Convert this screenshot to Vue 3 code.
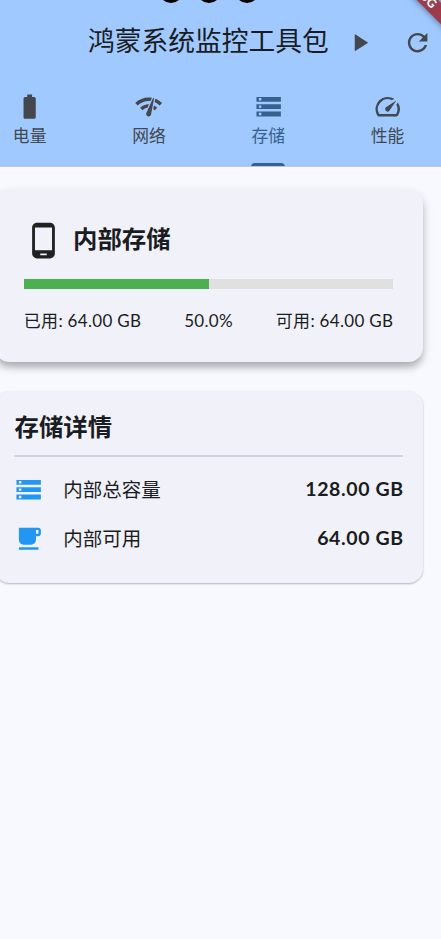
<script setup>
const icons = {
  battery: 'M15.67 4H14V2h-4v2H8.33C7.6 4 7 4.6 7 5.33v15.33C7 21.4 7.6 22 8.33 22h7.33c.74 0 1.34-.6 1.34-1.33V5.33C17 4.6 16.4 4 15.67 4z',
  network: 'M15.9 5c-.17 0-.32.09-.41.23l-.07.15-5.18 11.65c-.16.29-.26.61-.26.96 0 1.11.9 2.01 2.01 2.01.96 0 1.77-.68 1.96-1.59l.01-.03L16.4 5.5c0-.28-.22-.5-.5-.5zM1 9l2 2c2.88-2.88 6.79-4.08 10.53-3.62l1.19-2.68C9.89 3.84 4.74 5.27 1 9zm20 2l2-2c-1.64-1.64-3.55-2.82-5.59-3.57l-.53 2.82c1.5.62 2.9 1.53 4.12 2.75zm-4 4l2-2c-.8-.8-1.7-1.42-2.66-1.89l-.55 2.92c.42.27.83.59 1.21.97zM5 13l2 2c1.13-1.13 2.56-1.79 4.03-2l1.28-2.88c-2.63-.08-5.3.87-7.31 2.88z',
  storage: 'M2 20h20v-4H2v4zm2-3h2v2H4v-2zM2 4v4h20V4H2zm4 3H4V5h2v2zm-4 7h20v-4H2v4zm2-3h2v2H4v-2z',
  speed: 'M20.38 8.57l-1.23 1.85a8 8 0 0 1-.22 7.58H5.07A8 8 0 0 1 15.58 6.85l1.85-1.23A10 10 0 0 0 3.35 19a2 2 0 0 0 1.72 1h13.85a2 2 0 0 0 1.74-1 10 10 0 0 0-.27-10.44zm-9.79 6.84a2 2 0 0 0 2.83 0l5.66-8.49-8.49 5.66a2 2 0 0 0 0 2.83z',
  cup: 'M20 3H4v10c0 2.21 1.79 4 4 4h6c2.21 0 4-1.79 4-4v-3h2c1.11 0 2-.9 2-2V5c0-1.11-.89-2-2-2zm0 5h-2V5h2v3zM4 19h16v2H4z',
  phone: 'M16 1H8C6.34 1 5 2.34 5 4v16c0 1.66 1.34 3 3 3h8c1.66 0 3-1.34 3-3V4c0-1.66-1.34-3-3-3zm-2 20h-4v-1h4v1zm3.25-3H6.75V4h10.5v14z',
  play: 'M8 5v14l11-7z',
  refresh: 'M17.65 6.35C16.2 4.9 14.21 4 12 4c-4.42 0-7.99 3.58-7.99 8s3.57 8 7.99 8c3.73 0 6.84-2.55 7.73-6h-2.08c-.82 2.33-3.04 4-5.65 4-3.31 0-6-2.69-6-6s2.69-6 6-6c1.66 0 3.14.69 4.22 1.78L13 11h7V4l-2.35 2.35z',
}
const tabs = [
  { label: '电量', icon: 'battery' },
  { label: '网络', icon: 'network' },
  { label: '存储', icon: 'storage', active: true },
  { label: '性能', icon: 'speed' },
]
const percent = 50
const details = [
  { label: '内部总容量', value: '128.00 GB', icon: 'storage' },
  { label: '内部可用', value: '64.00 GB', icon: 'cup' },
]
</script>

<template>
  <div class="screen">
    <header class="header">
      <div class="cutouts"><i></i><i></i><i></i></div>
      <div class="debug"><span>DEBUG</span></div>
      <div class="bar">
        <h1>鸿蒙系统监控工具包</h1>
        <div class="actions">
          <svg class="icon" viewBox="0 0 24 24"><path :d="icons.play" /></svg>
          <svg class="icon" viewBox="0 0 24 24"><path :d="icons.refresh" /></svg>
        </div>
      </div>
      <nav class="tabs">
        <div v-for="t in tabs" :key="t.label" class="tab" :class="{ active: t.active }">
          <svg class="icon" viewBox="0 0 24 24"><path :d="icons[t.icon]" /></svg>
          <span>{{ t.label }}</span>
        </div>
      </nav>
    </header>

    <main class="content">
      <section class="card summary">
        <div class="heading">
          <svg viewBox="0 0 24 24"><path :d="icons.phone" /></svg>
          <h2>内部存储</h2>
        </div>
        <div class="track"><div class="fill" :style="{ width: percent + '%' }"></div></div>
        <div class="figures">
          <span>已用: 64.00 GB</span>
          <span>50.0%</span>
          <span>可用: 64.00 GB</span>
        </div>
      </section>

      <section class="card detail">
        <h2>存储详情</h2>
        <div v-for="d in details" :key="d.label" class="row">
          <svg class="icon" viewBox="0 0 24 24"><path :d="icons[d.icon]" /></svg>
          <span class="name">{{ d.label }}</span>
          <strong>{{ d.value }}</strong>
        </div>
      </section>
    </main>
  </div>
</template>

<style>
body {
  background: #f8f9ff;
}
</style>

<style scoped>
.screen {
  width: 441px;
  height: 939px;
  overflow: hidden;
  background: #f8f9ff;
  color: #191c20;
  font-family: Lato, "Noto Sans CJK SC", sans-serif;
}
h1,
h2 {
  margin: 0;
}
svg {
  display: block;
  flex: none;
  fill: currentColor;
}
.icon {
  width: 29.3px;
  height: 29.3px;
}
.header {
  position: relative;
  height: 166px;
  border-bottom: 1px solid #c3c6cf;
  background: #a0c9ff;
  color: #43474e;
  overflow: hidden;
}
.cutouts {
  position: absolute;
  top: -21px;
  left: 158.5px;
  display: flex;
  gap: 14.2px;
}
.cutouts i {
  width: 24px;
  height: 24px;
  border-radius: 50%;
  background: #000;
}
.debug {
  position: absolute;
  left: 359px;
  top: -16.3px;
  width: 120px;
  height: 14.6px;
  background: #9b3b4c;
  box-shadow: 0 0 7px rgba(0, 0, 0, 0.5);
  transform: rotate(45deg);
  color: #fff;
  font: 900 12.4px/14.6px Lato, sans-serif;
  text-align: center;
}
.bar {
  display: flex;
  align-items: center;
  justify-content: space-between;
  height: 84px;
  padding: 0 8.5px 0 88px;
}
h1 {
  color: #191c20;
  font-size: 26.75px;
  font-weight: 400;
  line-height: 40px;
  margin-top: -2px;
}
.actions {
  display: flex;
  gap: 29.3px;
  margin-top: 1px;
}
.tabs {
  display: flex;
  height: 83px;
  margin: 0 -6px 0 -30px;
}
.tab {
  position: relative;
  flex: none;
  display: flex;
  flex-direction: column;
  align-items: center;
  width: 119.3px;
  padding-top: 8px;
  font-size: 16.8px;
  font-weight: 400;
  line-height: 24px;
}
.tab span {
  margin-top: 3px;
}
.active {
  color: #36618e;
}
.active::after {
  content: "";
  position: absolute;
  bottom: 0;
  width: 34.5px;
  height: 4px;
  border-radius: 4px 4px 0 0;
  background: #36618e;
}
.content {
  display: flex;
  flex-direction: column;
  gap: 29px;
  padding: 23px 18.5px 0 0;
  margin-left: -5.5px;
}
.card {
  border-radius: 14.6px;
  background: #f1f1fa;
}
.summary {
  height: 172px;
  box-sizing: border-box;
  padding: 30px 29.3px 0;
  box-shadow: 0 6px 7px -1px rgba(0, 0, 0, 0.22), 0 4px 12px rgba(0, 0, 0, 0.14);
}
.heading {
  display: flex;
  align-items: center;
  gap: 10.5px;
  height: 40px;
}
.heading svg {
  width: 39px;
  height: 39px;
  margin-left: -0.3px;
  fill: #212121;
}
.heading h2 {
  margin-top: -2px;
}
h2 {
  font-size: 24.4px;
  font-weight: 700;
  line-height: 36px;
}
.track {
  height: 10px;
  margin-top: 19px;
  background: #e0e0e0;
}
.fill {
  height: 100%;
  background: #4caf50;
}
.figures {
  display: flex;
  justify-content: space-between;
  margin-top: 19px;
  font-size: 17px;
  line-height: 26px;
  letter-spacing: 0.3px;
}
.detail {
  height: 192px;
  box-sizing: border-box;
  padding: 18px 19.5px 0;
  box-shadow: 0 1px 2px rgba(0, 0, 0, 0.28);
}
.detail h2 {
  height: 46px;
  margin-bottom: 8px;
  border-bottom: 2px solid #d4d4de;
  text-indent: 0.5px;
}
.row {
  display: flex;
  align-items: center;
  height: 48.8px;
  font-size: 19.5px;
}
.row .icon {
  color: #2196f3;
}
.name {
  flex: 1;
  margin: -1px 0 0 20px;
}
strong {
  margin-top: -1px;
  font-weight: 700;
  letter-spacing: 0.6px;
  margin-right: -0.6px;
}
</style>
